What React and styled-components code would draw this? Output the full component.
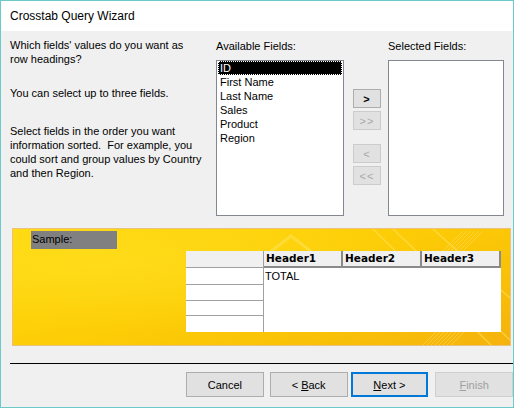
import styled, { createGlobalStyle } from 'styled-components';

const GlobalStyle = createGlobalStyle`
  html, body {
    margin: 0;
    padding: 0;
    background: #ffffff;
  }
  * {
    box-sizing: border-box;
  }
`;

const Window = styled.div`
  width: 514px;
  height: 408px;
  display: flex;
  flex-direction: column;
  border: 1px solid #6cc9c9;
  background: #f0f0f0;
  font-family: "Liberation Sans", Arial, sans-serif;
  font-size: 11px;
  color: #000;
  overflow: hidden;
`;

const TitleBar = styled.div`
  height: 30px;
  flex: none;
  display: flex;
  align-items: center;
  padding-left: 9px;
  background: #ffffff;
  font-size: 12px;
  color: #000;
`;

const Body = styled.div`
  flex: 1;
  display: flex;
  flex-direction: column;
`;

const Top = styled.div`
  display: flex;
  padding: 7px 0 0 9px;
  height: 197px;
`;

const Intro = styled.div`
  width: 206px;
  flex: none;
  line-height: 14px;
`;

const Para = styled.p`
  margin: 0 0 ${({ $gap }) => $gap}px;
`;

const FieldColumn = styled.div`
  width: ${({ $width }) => $width}px;
  flex: none;
  display: flex;
  flex-direction: column;
  padding-top: 1px;
`;

const Label = styled.div`
  height: 15px;
  line-height: 14px;
  margin-bottom: 6px;
`;

const ListBox = styled.div`
  height: 156px;
  background: #ffffff;
  border: 1px solid #828790;
  padding: 0 1px;
`;

const ListItem = styled.div`
  height: 14px;
  line-height: 14px;
  padding-left: 2px;
  background: ${({ $selected }) => ($selected ? '#000000' : 'transparent')};
  color: ${({ $selected }) => ($selected ? '#ffffff' : '#000000')};
  outline: ${({ $selected }) => ($selected ? '1px dotted #ffffff' : 'none')};
  outline-offset: -1px;
`;

const MoveButtons = styled.div`
  width: 28px;
  flex: none;
  margin: 0 7px 0 9px;
  padding-top: 51px;
  display: flex;
  flex-direction: column;
  gap: 3px;
`;

const MoveButton = styled.div`
  height: 19px;
  display: flex;
  align-items: center;
  justify-content: center;
  background: #e1e1e1;
  border: 1px solid ${({ $disabled }) => ($disabled ? '#cccccc' : '#adadad')};
  color: ${({ $disabled }) => ($disabled ? '#a8a8a8' : '#000000')};
  font-weight: ${({ $disabled }) => ($disabled ? 400 : 700)};
  font-size: 11px;
  letter-spacing: 1px;
  margin-top: ${({ $gapTop }) => ($gapTop ? 11 : 0)}px;
`;

const SamplePanel = styled.div`
  position: relative;
  margin: 0 2px 0 11px;
  height: 118px;
  border: 1px solid #e8c27e;
  background:
    radial-gradient(ellipse at 20% 30%, rgba(255, 226, 40, 0.55), rgba(255, 226, 40, 0) 60%),
    linear-gradient(160deg, #ffd80c 0%, #fdcd06 45%, #f9c108 75%, #f5b20d 100%);
  overflow: hidden;
  display: flex;
  align-items: flex-start;
  padding: 2px 0 0 18px;
`;

const Decor = styled.svg`
  position: absolute;
  inset: 0;
  pointer-events: none;
`;

const SampleLabel = styled.div`
  position: relative;
  width: 86px;
  height: 18px;
  line-height: 16px;
  background: #808080;
  color: #000;
  padding-left: 1px;
  flex: none;
`;

const Grid = styled.div`
  position: relative;
  margin: 20px 0 0 69px;
  display: flex;
  width: 315px;
  height: 81px;
`;

const RowHeaders = styled.div`
  width: 78px;
  flex: none;
  display: flex;
  flex-direction: column;
  background: #ffffff;
  border-right: 1px solid #a0a0a0;
`;

const Corner = styled.div`
  height: 17px;
  background: #f0f0f0;
  border-bottom: 1px solid #a0a0a0;
`;

const RowCell = styled.div`
  height: ${({ $h }) => $h}px;
  border-bottom: ${({ $last }) => ($last ? 'none' : '1px solid #a0a0a0')};
`;

const DataArea = styled.div`
  flex: 1;
  display: flex;
  flex-direction: column;
  background: #ffffff;
`;

const HeaderRow = styled.div`
  display: flex;
  height: 17px;
`;

const HeaderCell = styled.div`
  flex: 1;
  background: #f0f0f0;
  border-right: 2px solid #8a8a8a;
  border-bottom: 2px solid #8a8a8a;
  font-family: "DejaVu Sans", Tahoma, sans-serif;
  font-weight: 700;
  font-size: 10.5px;
  line-height: 15px;
  padding-left: 2px;
`;

const CellText = styled.div`
  padding: 1px 0 0 1px;
  line-height: 14px;
`;

const Separator = styled.div`
  margin: 17px 0 0 9px;
  height: 1px;
  background: #000000;
`;

const Footer = styled.div`
  display: flex;
  padding: 8px 0 0 185px;
  gap: 6px;
`;

const Button = styled.div`
  width: 78px;
  height: 25px;
  display: flex;
  align-items: center;
  justify-content: center;
  background: #e1e1e1;
  border: ${({ $default }) => ($default ? '2px solid' : '1px solid')};
  color: ${({ $disabled }) => ($disabled ? '#a0a0a0' : '#000000')};
  border-color: ${({ $disabled, $default }) =>
    $default ? '#0078d7' : $disabled ? '#cfcfcf' : '#adadad'};
  font-size: 11px;
  margin-left: ${({ $shift }) => $shift || 0}px;

  u {
    text-decoration: underline;
  }
`;

const fields = ['ID', 'First Name', 'Last Name', 'Sales', 'Product', 'Region'];

export default function App() {
  return (
    <>
      <GlobalStyle />
      <Window>
        <TitleBar>Crosstab Query Wizard</TitleBar>
        <Body>
          <Top>
            <Intro>
              <Para $gap={20}>
                Which fields' values do you want as
                <br />
                row headings?
              </Para>
              <Para $gap={24}>You can select up to three fields.</Para>
              <Para $gap={0}>
                Select fields in the order you want
                <br />
                information sorted.&nbsp; For example, you
                <br />
                could sort and group values by Country
                <br />
                and then Region.
              </Para>
            </Intro>
            <FieldColumn $width={128}>
              <Label>Available Fields:</Label>
              <ListBox>
                {fields.map((f, i) => (
                  <ListItem key={f} $selected={i === 0}>
                    {f}
                  </ListItem>
                ))}
              </ListBox>
            </FieldColumn>
            <MoveButtons>
              <MoveButton>&gt;</MoveButton>
              <MoveButton $disabled>&gt;&gt;</MoveButton>
              <MoveButton $disabled $gapTop>
                &lt;
              </MoveButton>
              <MoveButton $disabled>&lt;&lt;</MoveButton>
            </MoveButtons>
            <FieldColumn $width={116}>
              <Label>Selected Fields:</Label>
              <ListBox />
            </FieldColumn>
          </Top>
          <SamplePanel>
            <Decor width="498" height="118" viewBox="0 0 498 118">
              <g fill="none" stroke="#ffe45c" strokeOpacity="0.55" strokeWidth="1.5">
                <path d="M250 28 L278 6 L306 28" />
                <path d="M236 40 L278 8 L320 40" />
                <path d="M360 0 L480 118" />
                <path d="M380 0 L498 112" />
                <path d="M420 0 L498 70" />
              </g>
              <g stroke="#ffe070" strokeOpacity="0.45" strokeWidth="1">
                {Array.from({ length: 8 }).map((_, i) => (
                  <line key={i} x1={408 + i * 4} y1={118} x2={430 + i * 4} y2={96} />
                ))}
                {Array.from({ length: 6 }).map((_, i) => (
                  <line key={`t${i}`} x1={430 + i * 4} y1={22} x2={450 + i * 4} y2={2} />
                ))}
              </g>
            </Decor>
            <SampleLabel>Sample:</SampleLabel>
            <Grid>
              <RowHeaders>
                <Corner />
                <RowCell $h={17} />
                <RowCell $h={16} />
                <RowCell $h={15} />
                <RowCell $h={16} $last />
              </RowHeaders>
              <DataArea>
                <HeaderRow>
                  <HeaderCell>Header1</HeaderCell>
                  <HeaderCell>Header2</HeaderCell>
                  <HeaderCell>Header3</HeaderCell>
                </HeaderRow>
                <CellText>TOTAL</CellText>
              </DataArea>
            </Grid>
          </SamplePanel>
          <Separator />
          <Footer>
            <Button>Cancel</Button>
            <Button>
              &lt;&nbsp;<u>B</u>ack
            </Button>
            <Button $default $shift={-3}>
              <u>N</u>ext &gt;
            </Button>
            <Button $disabled $shift={1}>
              <u>F</u>inish
            </Button>
          </Footer>
        </Body>
      </Window>
    </>
  );
}
